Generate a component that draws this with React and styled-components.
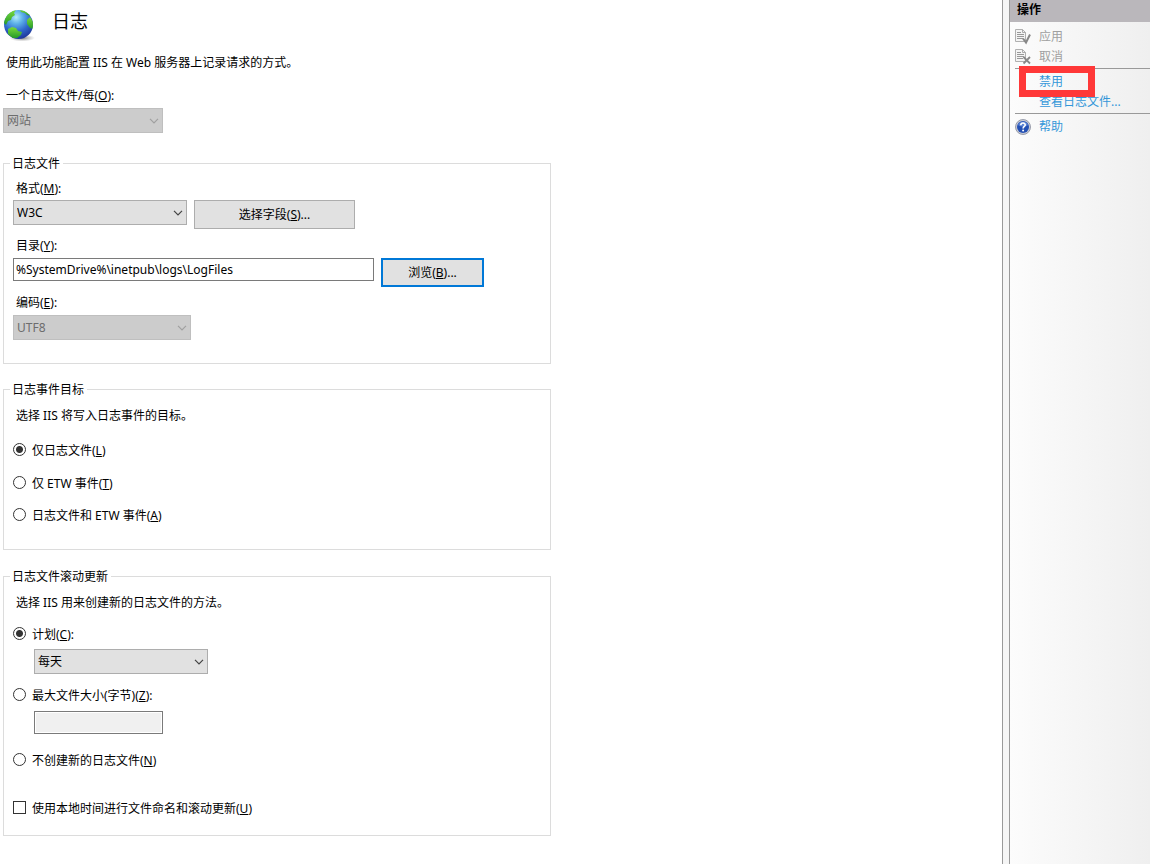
import React from "react";
import styled, { createGlobalStyle } from "styled-components";

const GlobalStyle = createGlobalStyle`
* {
  box-sizing: border-box;
}
body {
  margin: 0;
  background: #fff;
  color: #000;
  font-family: "Noto Sans", "Noto Sans CJK SC", sans-serif;
  font-size: 12px;
  line-height: 18px;
}
button, input, select {
  margin: 0;
  font: inherit;
  color: inherit;
  border-radius: 0;
}
`;

const Page = styled.div`
  display: flex;
  min-height: 100vh;
`;

const Main = styled.main`
  flex: 1;
  min-width: 0;
  padding: 8px 3px 28px;
`;

const Header = styled.header`
  display: flex;
  gap: 16px;
  height: 46px;
`;

const Title = styled.h1`
  margin: 0;
  font-size: 18px;
  font-weight: 400;
  line-height: 26px;
`;

const Text = styled.p`
  margin: 0;
  padding-left: 3px;
`;

const Label = styled.label`
  display: block;
  padding-left: 3px;
`;

const Field = styled.div`
  display: flex;
  flex-direction: column;
  gap: ${(p) => p.$gap || 3}px;
  margin-top: ${(p) => p.$top || 0}px;
`;

const Row = styled.div`
  display: flex;
  align-items: flex-start;
  gap: 7px;
`;

const Group = styled.fieldset`
  max-width: 548px;
  min-width: 0;
  margin: ${(p) => p.$gap}px 0 0;
  padding: 0 9px ${(p) => p.$bottom}px;
  border: 1px solid #dcdcdc;
`;

const Legend = styled.legend`
  margin-left: -3px;
  padding: 1px 3px 0 2px;
`;

const SelectBox = styled.div`
  display: grid;
  align-items: center;
  width: ${(p) => p.$width}px;
  color: ${(p) => (p.$disabled ? "#6d6d6d" : "#000")};

  select,
  svg {
    grid-area: 1 / 1;
  }
  svg {
    justify-self: end;
    margin-right: 4px;
    pointer-events: none;
    stroke: ${(p) => (p.$disabled ? "#a0a0a0" : "#444")};
  }
`;

const NativeSelect = styled.select`
  appearance: none;
  width: 100%;
  height: 25px;
  padding: 0 20px 0 3px;
  border: 1px solid #adadad;
  background: #e1e1e1;

  &:disabled {
    border-color: #bfbfbf;
    background: #ccc;
    opacity: 1;
  }
`;

const Button = styled.button`
  width: ${(p) => p.$width}px;
  height: 29px;
  padding: 0;
  border: ${(p) => (p.$primary ? "2px solid #0078d7" : "1px solid #adadad")};
  background: #e1e1e1;
`;

const TextInput = styled.input`
  width: ${(p) => p.$width}px;
  height: 23px;
  padding: 0 2px;
  border: 1px solid #7a7a7a;
  background: #fff;

  &:disabled {
    background: #f0f0f0;
    box-shadow: inset 0 0 0 1px #fff;
  }
`;

const Option = styled.label`
  display: flex;
  align-items: flex-start;
  gap: 6px;
  margin-top: ${(p) => p.$top}px;

  input {
    margin-top: 1px;
  }
`;

const Radio = styled.input.attrs({ type: "radio" })`
  appearance: none;
  width: 13px;
  height: 13px;
  border: 1px solid #333;
  border-radius: 50%;
  background: #fff;

  &:checked {
    background: radial-gradient(circle, #333 3px, #fff 4px);
  }
`;

const Checkbox = styled.input.attrs({ type: "checkbox" })`
  appearance: none;
  width: 13px;
  height: 13px;
  border: 1px solid #333;
  background: #fff;
`;

const Indent = styled.div`
  display: flex;
  margin-top: ${(p) => p.$top}px;
  padding-left: 21px;
`;

const Splitter = styled.div`
  width: 8px;
  border: solid #999;
  border-width: 0 1px;
  background: #f5f5f5;
`;

const Sidebar = styled.aside`
  width: 140px;
  background: linear-gradient(90deg, #fcfcfc, #efefef);
`;

const SidebarTitle = styled.h2`
  height: 22px;
  margin: 0;
  padding: 1px 7px;
  background: #bab7bb;
  font-size: 12px;
  font-weight: 700;
  line-height: 18px;
`;

const Actions = styled.ul`
  margin: 0;
  padding: 5px 0 1px 5px;
  list-style: none;

  & + & {
    margin-left: 5px;
    padding: 3px 0 1px;
    border-top: 1px solid #999;
  }
`;

const ActionItem = styled.li`
  position: relative;
  display: grid;
  grid-template-columns: 16px 1fr;
  column-gap: 8px;
  align-items: center;
  height: 20px;
`;

const ActionButton = styled.button`
  grid-column: 2;
  padding: 0;
  border: 0;
  background: none;
  color: #a0a0a0;
  text-align: left;
`;

const ActionLink = styled.a`
  grid-column: 2;
  color: #3397d9;
  text-decoration: none;
  white-space: nowrap;
`;

/* red frame laid over the link */
const Marker = styled.span`
  position: absolute;
  top: -6px;
  left: 4px;
  z-index: 1;
  width: 76px;
  height: 31px;
  border: 7px solid #ff3838;
  pointer-events: none;
`;

function Select({ id, width, disabled, value, label }) {
  return (
    <SelectBox $width={width} $disabled={disabled}>
      <NativeSelect id={id} disabled={disabled} defaultValue={value} aria-label={label}>
        <option>{value}</option>
      </NativeSelect>
      <svg width="10" height="6" viewBox="0 0 10 6" fill="none" strokeWidth="1.2">
        <path d="M1 0.8 5 4.8 9 0.8" />
      </svg>
    </SelectBox>
  );
}

function Globe() {
  return (
    <svg width="33" height="34" viewBox="0 0 33 34" aria-hidden="true">
      <defs>
        <radialGradient id="sea" cx="0.42" cy="0.25" r="0.75">
          <stop offset="0" stopColor="#b4ecfa" />
          <stop offset="0.3" stopColor="#5fb2ea" />
          <stop offset="0.65" stopColor="#2f68cc" />
          <stop offset="1" stopColor="#1f389c" />
        </radialGradient>
        <linearGradient id="land" x1="0" y1="0" x2="0" y2="1">
          <stop offset="0" stopColor="#7ada3c" />
          <stop offset="1" stopColor="#259a28" />
        </linearGradient>
        <radialGradient id="shade">
          <stop offset="0" stopColor="#555" stopOpacity="0.8" />
          <stop offset="1" stopColor="#888" stopOpacity="0" />
        </radialGradient>
        <clipPath id="ball">
          <circle cx="15.500" cy="16.500" r="14.500" />
        </clipPath>
      </defs>
      <ellipse cx="19" cy="30" rx="13" ry="3.500" fill="url(#shade)" />
      <circle cx="15.500" cy="16.500" r="14.500" fill="url(#sea)" />
      <g clipPath="url(#ball)" fill="url(#land)">
        <path d="M1 15C1 8 6 3 13 2l-2 3 1 2-3 2-1 3-3 1-2 4z" />
        <path d="M5 21l4-2 4 1 2 3 4 1-1 3-4 3-5 0-4-4z" />
        <path d="M17 2l7 1 4 5-4-1-2-2-4-1z" />
        <path d="M24 12l3-3 4 6-1 6-3-1-3-4z" />
      </g>
    </svg>
  );
}

function DocIcon({ children }) {
  return (
    <svg width="16" height="18" viewBox="0 0 16 18" fill="none" aria-hidden="true">
      <path d="M0.5 1.5h7l3 3v9h-10z" fill="#f4f4f4" stroke="#b0b0b0" />
      <path d="M7.5 1.5v3h3" stroke="#aaa" />
      <path d="M2 4.500h4M2 6.500h7M2 8.500h7M2 10.500h6" stroke="#999" />
      {children}
    </svg>
  );
}

function HelpIcon() {
  return (
    <svg width="16" height="16" viewBox="0 0 16 16" aria-hidden="true">
      <circle cx="8" cy="8" r="7.500" fill="#c9ccd6" stroke="#858a9a" strokeWidth="0.8" />
      <circle cx="8" cy="8" r="6" fill="#2450b4" />
      <path d="M3 6a5.500 5.500 0 0 1 10 0c-3 2-7 2-10 0z" fill="#5b83d4" />
      <path d="M5.800 6.200c0-3 4.600-2.800 4.400-.2C10.100 7.500 8.100 7.500 8.100 9.500" fill="none" stroke="#fff" strokeWidth="1.600" />
      <circle cx="8.100" cy="11.500" r="1" fill="#fff" />
    </svg>
  );
}

export default function App() {
  return (
    <Page>
      <GlobalStyle />
      <Main>
        <Header>
          <Globe />
          <Title>日志</Title>
        </Header>
        <Text>使用此功能配置 IIS 在 Web 服务器上记录请求的方式。</Text>
        <Field $top={15}>
          <Label htmlFor="per">一个日志文件/每(<u>O</u>):</Label>
          <Select id="per" width={160} value="网站" disabled />
        </Field>

        <Group $gap={21} $bottom={23}>
          <Legend>日志文件</Legend>
          <Field $top={7} $gap={2}>
            <Label htmlFor="format">格式(<u>M</u>):</Label>
            <Row>
              <Select id="format" width={174} value="W3C" />
              <Button type="button" $width={161}>选择字段(<u>S</u>)...</Button>
            </Row>
          </Field>
          <Field $top={8}>
            <Label htmlFor="folder">目录(<u>Y</u>):</Label>
            <Row>
              <TextInput id="folder" $width={361} defaultValue="%SystemDrive%\inetpub\logs\LogFiles" />
              <Button type="button" $width={103} $primary>浏览(<u>B</u>)...</Button>
            </Row>
          </Field>
          <Field $top={7}>
            <Label htmlFor="encoding">编码(<u>E</u>):</Label>
            <Select id="encoding" width={178} value="UTF8" disabled />
          </Field>
        </Group>

        <Group $gap={16} $bottom={24}>
          <Legend>日志事件目标</Legend>
          <Field $top={8}>
            <Text>选择 IIS 将写入日志事件的目标。</Text>
          </Field>
          <Option $top={17}>
            <Radio name="target" defaultChecked />
            <span>仅日志文件(<u>L</u>)</span>
          </Option>
          <Option $top={15}>
            <Radio name="target" />
            <span>仅 ETW 事件(<u>T</u>)</span>
          </Option>
          <Option $top={14}>
            <Radio name="target" />
            <span>日志文件和 ETW 事件(<u>A</u>)</span>
          </Option>
        </Group>

        <Group $gap={17} $bottom={17}>
          <Legend>日志文件滚动更新</Legend>
          <Field $top={8}>
            <Text>选择 IIS 用来创建新的日志文件的方法。</Text>
          </Field>
          <Option $top={14}>
            <Radio name="rollover" defaultChecked />
            <span>计划(<u>C</u>):</span>
          </Option>
          <Indent $top={5}>
            <Select width={174} value="每天" label="计划" />
          </Indent>
          <Option $top={13}>
            <Radio name="rollover" />
            <span>最大文件大小(字节)(<u>Z</u>):</span>
          </Option>
          <Indent $top={6}>
            <TextInput $width={129} aria-label="最大文件大小(字节)" disabled />
          </Indent>
          <Option $top={18}>
            <Radio name="rollover" />
            <span>不创建新的日志文件(<u>N</u>)</span>
          </Option>
          <Option $top={30}>
            <Checkbox />
            <span>使用本地时间进行文件命名和滚动更新(<u>U</u>)</span>
          </Option>
        </Group>
      </Main>

      <Splitter />
      <Sidebar>
        <SidebarTitle>操作</SidebarTitle>
        <Actions>
          <ActionItem>
            <DocIcon>
              <path d="M8 10.500l3 4L15 6.500" stroke="#888" strokeWidth="2" />
            </DocIcon>
            <ActionButton type="button" disabled>应用</ActionButton>
          </ActionItem>
          <ActionItem>
            <DocIcon>
              <path d="M8.500 9l6.500 6.500M15 9l-6.500 6.500" stroke="#888" strokeWidth="1.800" />
            </DocIcon>
            <ActionButton type="button" disabled>取消</ActionButton>
          </ActionItem>
        </Actions>
        <Actions>
          <ActionItem>
            <ActionLink href="#disable">禁用</ActionLink>
            <Marker />
          </ActionItem>
          <ActionItem>
            <ActionLink href="#view">查看日志文件...</ActionLink>
          </ActionItem>
        </Actions>
        <Actions>
          <ActionItem>
            <HelpIcon />
            <ActionLink href="#help">帮助</ActionLink>
          </ActionItem>
        </Actions>
      </Sidebar>
    </Page>
  );
}
